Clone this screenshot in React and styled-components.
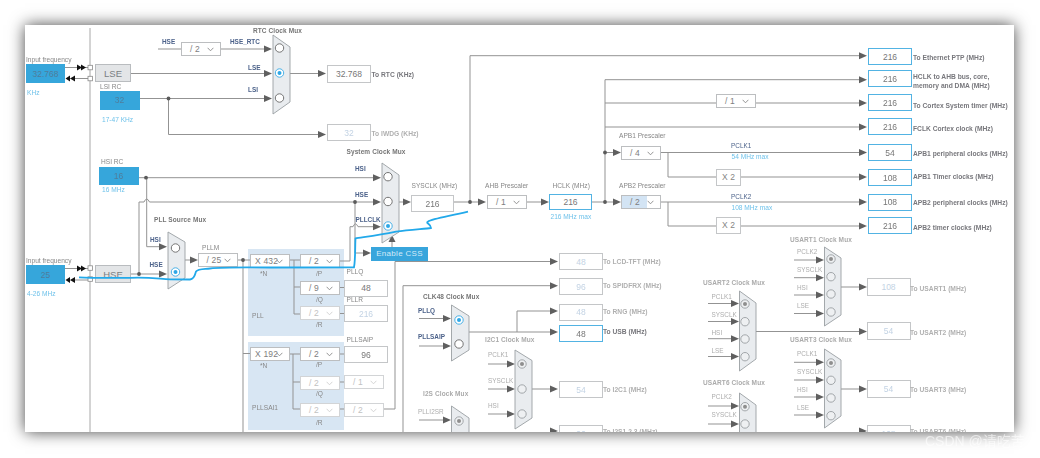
import { createGlobalStyle, styled, css } from "styled-components";

const ORIGIN = 25;

const GlobalStyle = createGlobalStyle`
  html, body {
    margin: 0;
    background: #ffffff;
    font-family: "Liberation Sans", Arial, sans-serif;
  }
`;

const Page = styled.div`
  position: relative;
  width: 1040px;
  height: 458px;
  padding: 25px;
  box-sizing: border-box;
  overflow: hidden;
  background: #ffffff;
`;

const Sheet = styled.div`
  position: relative;
  width: 989px;
  height: 407px;
  background: #ffffff;
  box-shadow: 0 0 15px rgba(0, 0, 0, 0.72);
`;

const Canvas = styled.div`
  position: absolute;
  inset: 0;
  overflow: hidden;
  filter: blur(0.55px);
`;

const Layer = styled.svg`
  position: absolute;
  left: 0;
  top: 0;
  width: 989px;
  height: 407px;
`;

// the diagram is a free canvas, so every node sits at its own spot
const node = css`
  position: absolute;
  left: ${(p) => p.$x - ORIGIN}px;
  top: ${(p) => p.$y - ORIGIN}px;
  box-sizing: border-box;
`;

const box = css`
  ${node}
  width: ${(p) => p.$w}px;
  height: ${(p) => p.$h}px;
  display: flex;
  align-items: center;
  justify-content: center;
`;

const Panel = styled.div`
  ${box}
  background: #d8e6f3;
`;

const Source = styled.div`
  ${box}
  background: #36a6db;
  color: #4f7d9c;
  font-size: 8.5px;
`;

const Pin = styled.div`
  ${box}
  background: #e3e5e7;
  border: 1px solid #b9bcbf;
  color: #7a7f83;
  font-size: 9.5px;
`;

const Value = styled.div`
  ${box}
  background: #ffffff;
  border: 1px solid ${(p) => (p.$on ? "#52b3e3" : "#c4c6c8")};
  border-width: ${(p) => (p.$on ? "1.5px" : "1px")};
  color: ${(p) => (p.$off ? "#c3d3e4" : "#777777")};
  font-size: 8.5px;
`;

const Multiplier = styled.div`
  ${box}
  background: #ffffff;
  border: 1px solid #c4c6c8;
  color: #858585;
  font-size: 8.5px;
`;

const Select = styled.div`
  ${box}
  justify-content: flex-start;
  padding-left: ${(p) => (p.$wide ? 4 : 8)}px;
  background: ${(p) =>
    p.$partial
      ? "linear-gradient(90deg, #d3e4f4 0 66%, #ffffff 66%)"
      : "#ffffff"};
  border: 1px solid ${(p) => (p.$off ? "#d2d4d6" : "#bcbec0")};
  color: ${(p) => (p.$off ? "#c2c2c2" : "#7e7e7e")};
  font-size: 8.5px;
  letter-spacing: 0.2px;
  white-space: nowrap;
`;

const Chevron = styled.svg`
  position: absolute;
  right: 6px;
  top: 4px;
  width: 7px;
  height: 5px;
  fill: none;
  stroke: ${(p) => (p.$off ? "#d0d0d0" : "#8a8a8a")};
  stroke-width: 0.9;
`;

const CssButton = styled.div`
  ${box}
  background: #38a5dc;
  color: #d4eaf8;
  font-size: 8px;
  letter-spacing: 0.3px;
`;

const text = css`
  ${node}
  transform: translateY(-50%);
  line-height: 1;
  white-space: nowrap;
`;

const MuxTitle = styled.div`
  ${text}
  font-size: 6.5px;
  font-weight: 700;
  letter-spacing: 0.1px;
  color: ${(p) => (p.$off ? "#ababab" : "#767676")};
`;

const OutLabel = styled.div`
  ${text}
  font-size: 6.7px;
  font-weight: 700;
  line-height: 9px;
  color: ${(p) => (p.$off ? "#b0b0b0" : "#77777c")};
`;

const Signal = styled.div`
  ${text}
  font-size: 6.4px;
  color: ${(p) => (p.$off ? "#adadad" : "#4c628a")};
  font-weight: ${(p) => (p.$strong ? 700 : 400)};
`;

const Note = styled.div`
  ${text}
  font-size: 6.6px;
  color: #878787;
`;

const Hint = styled.div`
  ${text}
  font-size: 6.6px;
  color: #6fc2ea;
`;

const Watermark = styled.div`
  position: absolute;
  left: 925px;
  top: 434px;
  font-family: "Liberation Sans", "Noto Sans CJK SC", sans-serif;
  font-size: 14px;
  line-height: 14px;
  white-space: nowrap;
  color: rgba(255, 255, 255, 0.6);
`;

const wires = [
  "M65 67.5H88", "M75 78.5H88", "M65 268.5H88", "M75 280H88",
  "M131 73.5H268", "M139 98.5H268", "M168.5 98.5V134.5H320", "M158 49H181", "M220 49H268",
  "M290 73.5H320",
  "M138 177.7H376", "M146.7 177.7V246.7H162", "M131 274H162",
  "M139 274V202H144Q146.7 196 149.5 202H376",
  "M185 260H193", "M238 260H250", "M243 260V432", "M243 353.5H250",
  "M290 260H300", "M294 260V314H300", "M294 287H300",
  "M340 261H350V226.7H353Q355.4 221 358 226.7H376", "M355 202V253H366",
  "M340 287.5H344", "M340 313.5H344",
  "M290 354H300", "M293 354V409H300", "M293 382H300",
  "M340 354H344", "M340 382H344", "M340 409H344",
  "M384 409H395V261.5H552", "M403 432V285.7H552",
  "M392 247V240",
  "M399 202H406", "M454 202H481", "M470 202V55.7H861",
  "M527 202H544", "M591 202H616", "M605 202V79.7H861",
  "M605 103H716", "M756 103H861", "M605 127H861", "M605 152.5H616",
  "M661 152.5H861", "M668 152.5V177H716", "M741 177H861",
  "M661 202H861", "M668 202V226H716", "M741 226H861",
  "M419 318.5H446", "M419 346H446", "M469 332H552", "M517 332V311H552",
  "M488 364H510", "M488 389H510", "M488 414H510", "M532 389H552", "M419 420H446",
  "M794 260H819", "M794 277.7H819", "M794 295H819", "M794 313.5H819", "M841 287H861",
  "M708 303.5H734", "M708 321.5H734", "M708 338.7H734", "M708 356.5H734", "M755 331.5H861",
  "M794 362.3H819", "M794 380H819", "M794 397H819", "M794 415H819", "M841 389H861",
  "M708 406H734", "M708 424H734",
];

// tip x, y of every right-pointing arrow head
const arrows = [
  [272, 49], [272, 73.5], [272, 98.5], [326, 73.5], [326, 134.5],
  [381, 177.7], [381, 202], [381, 226.7], [167, 246.7], [167, 274], [198, 260],
  [371, 253], [411, 202], [486, 202], [549, 202], [621, 152.5], [621, 202],
  [867, 55.7], [867, 79.7], [867, 103], [867, 127], [867, 152.5], [867, 177], [867, 202], [867, 226],
  [558, 261.5], [558, 285.7], [558, 311], [558, 332], [558, 389], [558, 431],
  [451, 318.5], [451, 346], [451, 420], [515, 364], [515, 389], [515, 414],
  [824, 260], [824, 277.7], [824, 295], [824, 313.5], [867, 287],
  [739, 303.5], [739, 321.5], [739, 338.7], [739, 356.5], [867, 331.5],
  [824, 362.3], [824, 380], [824, 397], [824, 415], [867, 389],
  [739, 406], [739, 424], [867, 431],
];

const dots = [
  [168.5, 98.5], [146, 177.7], [139, 274], [243, 260], [355, 202],
  [470, 202], [605, 202], [605, 152.5],
];

const muxes = [
  { x: 273, pts: [35, 47, 102, 114], xr: 290, cx: 279.5, ry: [48, 73, 98], on: 1 },
  { x: 168, pts: [232, 242, 278, 289], xr: 185, cx: 175.5, ry: [248, 272], on: 1 },
  { x: 382, pts: [163, 175, 232, 243], xr: 399, cx: 388, ry: [176.7, 201.5, 226], on: 2 },
  { x: 451.5, pts: [305, 316, 350, 361], xr: 469, cx: 459, ry: [320, 344], on: 0 },
  { x: 515, pts: [350, 360.5, 418, 429], xr: 532, cx: 522, ry: [364, 389, 414], on: 0, off: true },
  { x: 451.5, pts: [406, 418, 470, 480], xr: 469, cx: 459, ry: [421], on: 0, off: true },
  { x: 824.5, pts: [247, 258, 315, 326], xr: 841, cx: 831, ry: [259, 276.7, 294, 312], on: 0, off: true },
  { x: 739.5, pts: [291, 303, 359, 371], xr: 756, cx: 745, ry: [304, 321.7, 339, 356.7], on: 0, off: true },
  { x: 824.5, pts: [349, 360, 416, 428], xr: 841, cx: 831, ry: [363, 380.3, 398, 415.7], on: 0, off: true },
  { x: 739.5, pts: [393, 405, 470, 480], xr: 756, cx: 745, ry: [406.7, 424], on: 0, off: true },
];

const Mux = ({ x, xr, cx, pts, ry, on, off }) => (
  <g>
    <polygon
      points={`${x},${pts[0]} ${xr},${pts[1]} ${xr},${pts[2]} ${x},${pts[3]}`}
      fill="#e9ecef"
      stroke="#9a9fa3"
      strokeWidth="0.9"
    />
    {ry.map((y, i) => (
      <g key={y}>
        <circle
          cx={cx}
          cy={y}
          r="4.2"
          fill={off ? "#eef0f2" : "#ffffff"}
          stroke={i === on && !off ? "#38a9e4" : off ? "#9a9ea2" : "#666666"}
          strokeWidth="0.9"
        />
        {i === on && <circle cx={cx} cy={y} r="2" fill={off ? "#8e8e8e" : "#2ea7e6"} />}
      </g>
    ))}
  </g>
);

const values = [
  { x: 327, y: 65, w: 44, h: 18, v: "32.768" },
  { x: 327, y: 124, w: 44, h: 17, v: "32", off: true },
  { x: 411, y: 195, w: 43, h: 17, v: "216" },
  { x: 549, y: 194, w: 43, h: 16, v: "216", on: true },
  { x: 868, y: 48, w: 44, h: 17, v: "216", on: true },
  { x: 868, y: 70, w: 44, h: 17, v: "216", on: true },
  { x: 868, y: 94, w: 44, h: 17, v: "216", on: true },
  { x: 868, y: 118, w: 44, h: 17, v: "216", on: true },
  { x: 868, y: 144, w: 44, h: 17, v: "54", on: true },
  { x: 868, y: 169, w: 44, h: 17, v: "108", on: true },
  { x: 868, y: 193.5, w: 44, h: 17, v: "108", on: true },
  { x: 868, y: 217, w: 44, h: 17, v: "216", on: true },
  { x: 344, y: 279.5, w: 44, h: 17, v: "48" },
  { x: 344, y: 305, w: 44, h: 17, v: "216", off: true },
  { x: 344, y: 346, w: 44, h: 17, v: "96" },
  { x: 559, y: 253, w: 44, h: 17, v: "48", off: true },
  { x: 559, y: 278, w: 44, h: 17, v: "96", off: true },
  { x: 559, y: 303.5, w: 44, h: 17, v: "48", off: true },
  { x: 559, y: 325, w: 44, h: 17, v: "48", on: true },
  { x: 559, y: 381, w: 44, h: 17, v: "54", off: true },
  { x: 559, y: 425, w: 44, h: 17, v: "96", off: true },
  { x: 866.5, y: 278, w: 44, h: 18, v: "108", off: true },
  { x: 866.5, y: 322, w: 44, h: 18, v: "54", off: true },
  { x: 866.5, y: 380, w: 44, h: 18, v: "54", off: true },
  { x: 866.5, y: 425, w: 44, h: 18, v: "108", off: true },
];

const selects = [
  { x: 181, y: 42, v: "/ 2" },
  { x: 197.5, y: 253, v: "/ 25" },
  { x: 250, y: 253.5, v: "X 432", wide: true },
  { x: 300, y: 253.5, v: "/ 2" },
  { x: 300, y: 281, v: "/ 9" },
  { x: 300, y: 306, v: "/ 2", off: true },
  { x: 250, y: 347, v: "X 192", wide: true },
  { x: 300, y: 347, v: "/ 2" },
  { x: 300, y: 376, v: "/ 2", off: true },
  { x: 300, y: 402.5, v: "/ 2", off: true },
  { x: 344, y: 375, v: "/ 1", off: true },
  { x: 344, y: 402.5, v: "/ 2", off: true },
  { x: 487, y: 195, v: "/ 1" },
  { x: 621, y: 145.5, v: "/ 4" },
  { x: 621, y: 195, v: "/ 2", partial: true },
  { x: 716, y: 94, v: "/ 1" },
];

const outLabels = [
  { x: 371.5, y: 73.5, t: "To RTC (KHz)" },
  { x: 371.5, y: 132.5, t: "To IWDG (KHz)", off: true },
  { x: 913, y: 56.5, t: "To Ethernet PTP (MHz)" },
  { x: 913, y: 80.5, t: <>HCLK to AHB bus, core,<br />memory and DMA (MHz)</> },
  { x: 913, y: 104.5, t: "To Cortex System timer (MHz)" },
  { x: 913, y: 128, t: "FCLK Cortex clock (MHz)" },
  { x: 913, y: 152.5, t: "APB1 peripheral clocks (MHz)" },
  { x: 913, y: 176, t: "APB1 Timer clocks (MHz)" },
  { x: 913, y: 202, t: "APB2 peripheral clocks (MHz)" },
  { x: 913, y: 227, t: "APB2 timer clocks (MHz)" },
  { x: 603, y: 261, t: "To LCD-TFT (MHz)", off: true },
  { x: 603, y: 284.5, t: "To SPIDFRX (MHz)", off: true },
  { x: 603, y: 311, t: "To RNG (MHz)", off: true },
  { x: 603, y: 331, t: "To USB (MHz)" },
  { x: 603, y: 388.5, t: "To I2C1 (MHz)", off: true },
  { x: 603, y: 431, t: "To I2S1 2 3 (MHz)", off: true },
  { x: 910, y: 287.5, t: "To USART1 (MHz)", off: true },
  { x: 910, y: 331.5, t: "To USART2 (MHz)", off: true },
  { x: 910, y: 388.5, t: "To USART3 (MHz)", off: true },
  { x: 910, y: 431, t: "To USART6 (MHz)", off: true },
];

const muxTitles = [
  { x: 253, y: 30.5, t: "RTC Clock Mux" },
  { x: 346.5, y: 151.5, t: "System Clock Mux" },
  { x: 154, y: 219.5, t: "PLL Source Mux" },
  { x: 423, y: 296.5, t: "CLK48 Clock Mux" },
  { x: 485, y: 339.5, t: "I2C1 Clock Mux", off: true },
  { x: 423, y: 393.5, t: "I2S Clock Mux", off: true },
  { x: 790, y: 239.5, t: "USART1 Clock Mux", off: true },
  { x: 703, y: 282.5, t: "USART2 Clock Mux", off: true },
  { x: 790, y: 339.5, t: "USART3 Clock Mux", off: true },
  { x: 703, y: 382.5, t: "USART6 Clock Mux", off: true },
];

const signals = [
  { x: 162, y: 42, t: "HSE", strong: true }, { x: 230, y: 42, t: "HSE_RTC", strong: true },
  { x: 248, y: 67.5, t: "LSE", strong: true }, { x: 248, y: 89.5, t: "LSI", strong: true },
  { x: 355, y: 168.5, t: "HSI", strong: true }, { x: 355, y: 194.5, t: "HSE", strong: true },
  { x: 355.5, y: 219.5, t: "PLLCLK", strong: true },
  { x: 150, y: 239.5, t: "HSI", strong: true }, { x: 149.5, y: 265, t: "HSE", strong: true },
  { x: 418, y: 311, t: "PLLQ", strong: true }, { x: 418, y: 336.5, t: "PLLSAIP", strong: true },
  { x: 731, y: 146, t: "PCLK1" }, { x: 731, y: 196.5, t: "PCLK2" },
  { x: 418, y: 411.5, t: "PLLI2SR", off: true },
  { x: 488, y: 355, t: "PCLK1", off: true }, { x: 488, y: 380.5, t: "SYSCLK", off: true },
  { x: 488, y: 406, t: "HSI", off: true },
  { x: 797, y: 252, t: "PCLK2", off: true }, { x: 797, y: 270, t: "SYSCLK", off: true },
  { x: 797, y: 288, t: "HSI", off: true }, { x: 797, y: 305.5, t: "LSE", off: true },
  { x: 711.5, y: 296.5, t: "PCLK1", off: true }, { x: 711.5, y: 314.7, t: "SYSCLK", off: true },
  { x: 711.5, y: 332.5, t: "HSI", off: true }, { x: 711.5, y: 350.5, t: "LSE", off: true },
  { x: 797, y: 353.5, t: "PCLK1", off: true }, { x: 797, y: 372, t: "SYSCLK", off: true },
  { x: 797, y: 390, t: "HSI", off: true }, { x: 797, y: 407.5, t: "LSE", off: true },
  { x: 711.5, y: 397, t: "PCLK2", off: true }, { x: 711.5, y: 415, t: "SYSCLK", off: true },
];

const notes = [
  { x: 26, y: 59.5, t: "Input frequency" }, { x: 26, y: 260.5, t: "Input frequency" },
  { x: 100, y: 86.5, t: "LSI RC" }, { x: 101, y: 162, t: "HSI RC" },
  { x: 411.5, y: 185.5, t: "SYSCLK (MHz)" }, { x: 485, y: 185.5, t: "AHB Prescaler" },
  { x: 552.5, y: 185.5, t: "HCLK (MHz)" }, { x: 619, y: 135.5, t: "APB1 Prescaler" },
  { x: 619, y: 185.5, t: "APB2 Prescaler" }, { x: 202, y: 248, t: "PLLM" },
  { x: 260, y: 273.5, t: "*N" }, { x: 316, y: 273.5, t: "/P" }, { x: 316, y: 300, t: "/Q" },
  { x: 316, y: 325, t: "/R" }, { x: 252, y: 315.5, t: "PLL" },
  { x: 260, y: 365.5, t: "*N" }, { x: 316, y: 365, t: "/P" }, { x: 316, y: 393.5, t: "/Q" },
  { x: 316, y: 422.5, t: "/R" }, { x: 252, y: 407.5, t: "PLLSAI1" },
  { x: 346.5, y: 271.5, t: "PLLQ" }, { x: 346.5, y: 300, t: "PLLR" }, { x: 346.5, y: 339.5, t: "PLLSAIP" },
];

const hints = [
  { x: 27, y: 93, t: "KHz" }, { x: 102, y: 119.5, t: "17-47 KHz" }, { x: 102, y: 189.5, t: "16 MHz" },
  { x: 27, y: 293.5, t: "4-26 MHz" }, { x: 550.5, y: 216.5, t: "216 MHz max" },
  { x: 731.5, y: 157, t: "54 MHz max" }, { x: 731.5, y: 207.5, t: "108 MHz max" },
];

export default function App() {
  return (
    <Page>
      <GlobalStyle />
      <Sheet>
        <Canvas>
          <Panel $x={248} $y={249} $w={96} $h={87} />
          <Panel $x={247.5} $y={342} $w={96} $h={88} />

          <Layer viewBox="25 25 989 407">
            <path d="M90 28V432" stroke="#a8a8a8" strokeWidth="1" fill="none" />
            {wires.map((d) => (
              <path key={d} d={d} stroke="#939393" strokeWidth="1" fill="none" />
            ))}
            {arrows.map(([x, y]) => (
              <polygon key={`${x}-${y}`} points={`${x},${y} ${x - 8},${y - 3.5} ${x - 8},${y + 3.5}`} fill="#5f5f5f" />
            ))}
            <polygon points="392,235 388.5,242 395.5,242" fill="#5f5f5f" />
            {dots.map(([x, y]) => (
              <circle key={`${x}-${y}`} cx={x} cy={y} r="1.9" fill="#5a5a5a" />
            ))}
            {[67.5, 268.5].map((y) => (
              <path key={y} d={`M77 ${y - 3}L82 ${y}L77 ${y + 3}ZM81 ${y - 3}L86 ${y}L81 ${y + 3}Z`} fill="#111111" />
            ))}
            {[78.5, 280].map((y) => (
              <path key={y} d={`M70 ${y - 3}L65.5 ${y}L70 ${y + 3}ZM75 ${y - 3}L70 ${y}L75 ${y + 3}Z`} fill="#111111" />
            ))}
            {[67.5, 78.5, 268, 279].map((y) => (
              <rect key={y} x="88" y={y - 2.2} width="4.5" height="4.5" fill="#ffffff" stroke="#8a8a8a" strokeWidth="0.8" />
            ))}
            {muxes.map((m) => (
              <Mux key={`${m.x}-${m.pts[0]}`} {...m} />
            ))}
          </Layer>

          <Source $x={26} $y={64} $w={39} $h={19}>32.768</Source>
          <Source $x={99.5} $y={90.5} $w={40} $h={19.5}>32</Source>
          <Source $x={98.5} $y={167} $w={40} $h={18}>16</Source>
          <Source $x={26} $y={265} $w={39} $h={19}>25</Source>
          <Pin $x={95} $y={64} $w={36} $h={18}>LSE</Pin>
          <Pin $x={95} $y={265} $w={36} $h={18}>HSE</Pin>
          <CssButton $x={371} $y={247} $w={57} $h={13.5}>Enable CSS</CssButton>
          <Multiplier $x={716} $y={169} $w={25} $h={16.5}>X 2</Multiplier>
          <Multiplier $x={716} $y={217} $w={25} $h={16.5}>X 2</Multiplier>

          {values.map((b) => (
            <Value key={`${b.x}-${b.y}`} $x={b.x} $y={b.y} $w={b.w} $h={b.h} $on={b.on} $off={b.off}>
              {b.v}
            </Value>
          ))}
          {selects.map((s) => (
            <Select key={`${s.x}-${s.y}`} $x={s.x} $y={s.y} $w={40} $h={14} $off={s.off} $wide={s.wide} $partial={s.partial}>
              {s.v}
              <Chevron viewBox="0 0 7 5" $off={s.off}>
                <polyline points="0.6,0.8 3.5,3.8 6.4,0.8" />
              </Chevron>
            </Select>
          ))}
          {outLabels.map((l) => (
            <OutLabel key={`${l.x}-${l.y}`} $x={l.x} $y={l.y} $off={l.off}>{l.t}</OutLabel>
          ))}
          {muxTitles.map((l) => (
            <MuxTitle key={l.t} $x={l.x} $y={l.y} $off={l.off}>{l.t}</MuxTitle>
          ))}
          {signals.map((l) => (
            <Signal key={`${l.x}-${l.y}`} $x={l.x} $y={l.y} $off={l.off} $strong={l.strong}>{l.t}</Signal>
          ))}
          {notes.map((l) => (
            <Note key={`${l.x}-${l.y}`} $x={l.x} $y={l.y}>{l.t}</Note>
          ))}
          {hints.map((l) => (
            <Hint key={l.t} $x={l.x} $y={l.y}>{l.t}</Hint>
          ))}

          <Layer viewBox="25 25 989 407">
            <path
              d="M79 277.3C90 278 110 278 130 277.8C150 277 160 279 170 279.3L190 279.5C195 279 195 274 196 271.5C198 269 203 269.3 210 268.5C225 267 240 267.5 270 267.5L354 267.3C355.5 260 355 245 355.5 238.5C360 237.5 375 236 396 231.7C410 229.5 425 229 431 228C431 224 425 223 428 221.5C432 219 445 217 468 211.7"
              stroke="#22a9ea"
              strokeWidth="1.8"
              fill="none"
            />
          </Layer>
        </Canvas>
      </Sheet>
      <Watermark>CSDN @请吃苦</Watermark>
    </Page>
  );
}
